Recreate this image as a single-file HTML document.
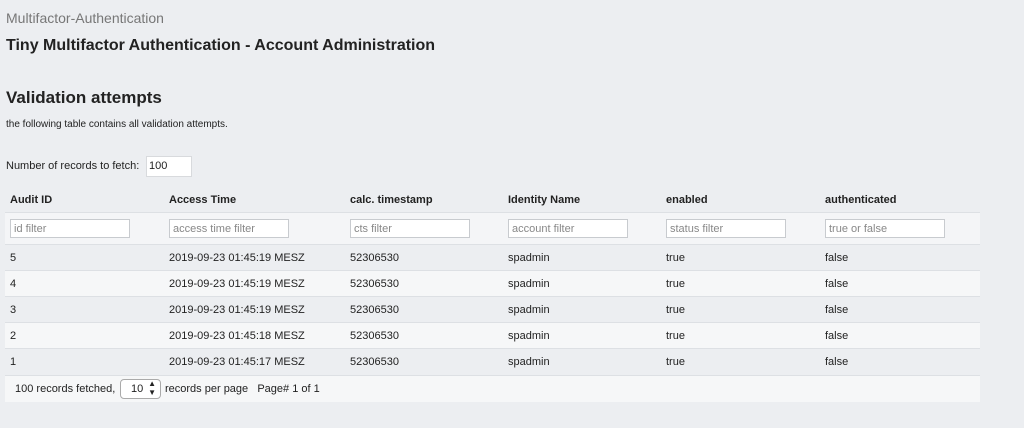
<!DOCTYPE html>
<html><head><style>
body{margin:0;background:#eceef1;font-family:"Liberation Sans",sans-serif;color:#222;width:1024px;height:428px;overflow:hidden;position:relative}
.a{position:absolute;white-space:nowrap}
table{position:absolute;left:5px;top:188px;width:975px;border-collapse:collapse;font-size:11px}
td,th{padding:0 0 0 5px;text-align:left;border-top:1px solid #dde0e4}
th{height:24px;font-weight:bold;border-top:none}
tr.f td{height:31px;background:#f4f5f7}
tr.r td{height:25px}
tr.w td{background:#f6f7f8}
input{font:11px "Liberation Sans",sans-serif;width:112px;height:15px;border:1px solid #c8cbcf;padding:1px 3px;color:#888;background:#fff;margin:0}
.ft{position:absolute;left:5px;top:375px;width:975px;height:26px;background:#f6f7f8;font-size:11px;border-top:1px solid #dde0e4}
</style></head><body>
<div class="a" style="left:6px;top:10px;font-size:14px;color:#777">Multifactor-Authentication</div>
<div class="a" style="left:6px;top:37px;font-size:16px;font-weight:bold;color:#222">Tiny Multifactor Authentication - Account Administration</div>
<div class="a" style="left:6px;top:88px;font-size:17px;font-weight:bold;color:#222">Validation attempts</div>
<div class="a" style="left:6px;top:119px;font-size:10px">the following table contains all validation attempts.</div>
<div class="a" style="left:6px;top:160px;font-size:11px">Number of records to fetch:</div>
<div class="a" style="left:146px;top:156px;width:42px;height:19px;background:#fff;border:1px solid #d8dadd;font-size:11px;line-height:19px;padding-left:2px">100</div>
<table>
<tr><th style="width:154px">Audit ID</th><th style="width:176px">Access Time</th><th style="width:153px">calc. timestamp</th><th style="width:153px">Identity Name</th><th style="width:154px">enabled</th><th>authenticated</th></tr>
<tr class="f"><td><input value="id filter"></td><td><input value="access time filter"></td><td><input value="cts filter"></td><td><input value="account filter"></td><td><input value="status filter"></td><td><input value="true or false"></td></tr>
<tr class="r"><td>5</td><td>2019-09-23 01:45:19 MESZ</td><td>52306530</td><td>spadmin</td><td>true</td><td>false</td></tr>
<tr class="r w"><td>4</td><td>2019-09-23 01:45:19 MESZ</td><td>52306530</td><td>spadmin</td><td>true</td><td>false</td></tr>
<tr class="r"><td>3</td><td>2019-09-23 01:45:19 MESZ</td><td>52306530</td><td>spadmin</td><td>true</td><td>false</td></tr>
<tr class="r w"><td>2</td><td>2019-09-23 01:45:18 MESZ</td><td>52306530</td><td>spadmin</td><td>true</td><td>false</td></tr>
<tr class="r"><td>1</td><td>2019-09-23 01:45:17 MESZ</td><td>52306530</td><td>spadmin</td><td>true</td><td>false</td></tr>
</table>
<div class="ft">
<span class="a" style="left:10px;top:7px">100 records fetched,</span>
<span class="a" style="left:115px;top:3px;width:39px;height:18px;border:1px solid #aaa;border-radius:4px;background:#fff;line-height:18px;font-size:11px"><span style="position:absolute;left:10px">10</span><span style="position:absolute;right:4px;top:-1px;font-size:8px;line-height:9px">▲<br>▼</span></span>
<span class="a" style="left:160px;top:7px">records per page &nbsp; Page# 1 of 1</span>
</div>
</body></html>
